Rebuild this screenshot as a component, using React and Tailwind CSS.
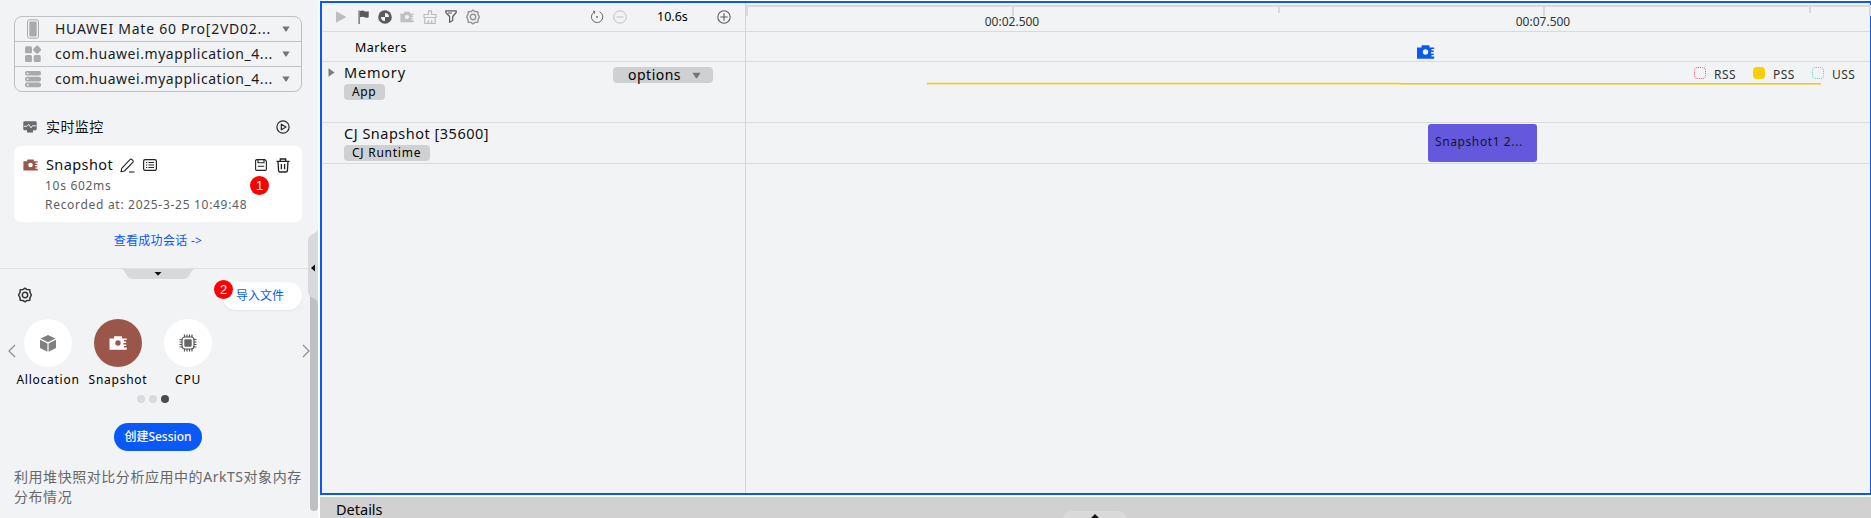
import React from 'react';

const Camera = ({ className }) => (
  <svg viewBox="0 0 18 14" className={className} fill="currentColor">
    <path
      fillRule="evenodd"
      d="M0.5 2.5H5V1Q5 0.3 5.7 0.3H12.3Q13 0.3 13 1V2.5H17.7V4H15V5.5H17.2V7H14.5V8.5H17.2V10H15V11.5H17.7V13.7H0.5ZM9 4.3A2.7 2.7 0 1 0 9 9.7A2.7 2.7 0 1 0 9 4.3Z"
    />
  </svg>
);

const Gear = ({ className, sw = 1.5 }) => (
  <svg viewBox="0 0 16 16" className={className} fill="none" stroke="currentColor" strokeWidth={sw} strokeLinejoin="round">
    <path d="M5.9 2.6L8 1.2L10.100 2.600L12.800 2.800L13 5.400L14.400 8L13 10.600L12.800 13.200L10.100 13.400L8 14.800L5.900 13.400L3.200 13.200L3 10.600L1.600 8L3 5.400L3.200 2.800Z" />
    <circle cx="8" cy="8" r="2.7" />
  </svg>
);

const Down = ({ className }) => (
  <svg viewBox="0 0 8 6" className={className} fill="currentColor">
    <path d="M0.4 0.5H7.6L4.6 5.2Q4 5.9 3.4 5.2Z" />
  </svg>
);

const PhoneIcon = () => (
  <svg viewBox="0 0 18 20" className="h-5 w-[18px]">
    <rect x="3.5" y="0.8" width="11" height="18.4" rx="2" fill="none" stroke="#a9aaab" />
    <rect x="5.3" y="2.6" width="7.4" height="14.8" rx="0.8" fill="#a9aaab" />
  </svg>
);
const AppsIcon = () => (
  <svg viewBox="0 0 18 18" className="size-[18px]" fill="#a9aaab">
    <rect x="1" y="1.2" width="7" height="7" rx="1.5" />
    <rect x="9.8" y="1.4" width="6.6" height="6.6" rx="1.5" transform="rotate(45 13.1 4.7)" />
    <rect x="1" y="10" width="7" height="7" rx="1.5" />
    <rect x="9.7" y="10" width="7" height="7" rx="1.5" />
  </svg>
);
const ServerIcon = () => (
  <svg viewBox="0 0 18 18" className="size-[18px]">
    <g fill="#a9aaab">
      <rect x="1" y="1" width="16" height="4.6" rx="2" />
      <rect x="1" y="6.8" width="16" height="4.6" rx="2" />
      <rect x="1" y="12.6" width="16" height="4.6" rx="2" />
    </g>
    <g fill="#f1f3f5">
      <circle cx="3.7" cy="3.3" r="0.9" />
      <circle cx="3.7" cy="9.1" r="0.9" />
      <circle cx="3.7" cy="14.9" r="0.9" />
    </g>
  </svg>
);

const devices = [
  { icon: PhoneIcon, name: 'HUAWEI Mate 60 Pro[2VD02...', spacing: 'tracking-[0.75px]' },
  { icon: AppsIcon, name: 'com.huawei.myapplication_4...', spacing: 'tracking-[0.55px]' },
  { icon: ServerIcon, name: 'com.huawei.myapplication_4...', spacing: 'tracking-[0.55px]' },
];

function Badge({ children, className }) {
  return (
    <span className={`absolute flex size-[19px] items-center justify-center rounded-full bg-[#fe0000] font-['Liberation_Sans'] text-[13px] tracking-normal text-white ${className}`}>
      {children}
    </span>
  );
}

function Sidebar() {
  return (
    <aside className="relative h-[518px] w-[318px] shrink-0 overflow-hidden bg-[#f1f3f5]">
      <div className="flex h-[268px] flex-col pl-[14px] pr-4 pt-4">
        <div className="h-[76px] shrink-0 divide-y divide-[#bfc0c2] rounded-[8px] border border-[#bfc0c2]">
          {devices.map(({ icon: Icon, name, spacing }, i) => (
            <div key={i} className="flex h-[25px] items-center pl-[9px] pr-[11px] last:h-6">
              <Icon />
              <span className={`ml-[13px] flex-1 whitespace-nowrap pb-px text-[14px] leading-[22px] text-[#1c1c1e] ${spacing}`}>{name}</span>
              <Down className="h-[6px] w-[8px] text-[#70757c]" />
            </div>
          ))}
        </div>

        <div className="mt-[25px] flex h-5 shrink-0 items-center pl-[9px] pr-3">
          <svg viewBox="0 0 14 12" className="h-3 w-[14px]">
            <path d="M1.5 0.3H12.5Q13.7 0.3 13.7 1.5V8Q13.7 9.2 12.5 9.2H1.5Q0.3 9.2 0.3 8V1.5Q0.3 0.3 1.5 0.3ZM4 9H10V11.5H4Z" fill="#6a6b6e" />
            <path d="M1 5.300H4L5.7 3.300L8 6.800L9.3 4.800H13" fill="none" stroke="#fff" strokeWidth="0.900" />
          </svg>
          <span className="ml-[9px] flex-1 text-[14px] leading-5 tracking-[0.4px] text-[#111]">实时监控</span>
          <svg viewBox="0 0 14 14" className="size-[14px]" fill="none" stroke="#2a2a2c" strokeWidth="1.2">
            <circle cx="7" cy="7" r="6.1" />
            <path d="M5.3 4.2L10 7L5.3 9.8Z" strokeLinejoin="round" />
          </svg>
        </div>

        <div className="relative mt-[9px] h-[76px] shrink-0 rounded-[7px] bg-white pl-[9px] pr-3 pt-[9px]">
          <div className="flex h-5 items-center">
            <Camera className="h-[12px] w-[15px] text-[#9b564b]" />
            <span className="ml-2 w-[74px] pb-0.5 text-[14.5px] leading-5 tracking-[0.4px] text-[#111]">Snapshot</span>
            <svg viewBox="0 0 15 15" className="size-[15px]" fill="none" stroke="#222" strokeWidth="1.1" strokeLinejoin="round">
              <path d="M1 13.8L1.7 10.3L10.2 1.4Q11 0.8 11.8 1.4L13 2.6Q13.6 3.3 13 4.1L4.5 13Z" />
              <path d="M9 14H14.5" />
            </svg>
            <svg viewBox="0 0 14 12" className="ml-2 h-3 w-[14px]" fill="none" stroke="#222" strokeWidth="1.2">
              <rect x="0.6" y="0.6" width="12.8" height="10.8" rx="1.6" />
              <path d="M3 3.5H4.3M5.5 3.5H11M3 6H4.3M5.5 6H11M3 8.5H4.3M5.5 8.5H11" strokeWidth="1" />
            </svg>
            <span className="flex-1" />
            <svg viewBox="0 0 12 12" className="size-3" fill="none" stroke="#222" strokeWidth="1.1">
              <path d="M1.8 0.6H9.8L11.4 2.2V10.2Q11.4 11.4 10.2 11.4H1.8Q0.6 11.4 0.6 10.2V1.8Q0.6 0.6 1.8 0.6Z" />
              <path d="M3 0.8V3.8H9V0.8M2.8 7.3H9.2" />
            </svg>
            <svg viewBox="0 0 14 15" className="ml-[9px] h-[15px] w-[14px]" fill="none" stroke="#222" strokeWidth="1.3">
              <path d="M0.5 3.3H13.5M4.3 3V1H9.7V3M2 3.5L2.6 12.6Q2.7 14 4 14H10Q11.3 14 11.4 12.6L12 3.5M5.4 6V11.3M8.6 6V11.3" />
            </svg>
          </div>
          <div className="mt-px pl-[22px] text-[12px] leading-[19px] tracking-[0.7px] text-[#5c5d60]">
            <p>10s 602ms</p>
            <p className="whitespace-nowrap">Recorded at: 2025-3-25 10:49:48</p>
          </div>
          <Badge className="left-[236px] top-[30px]">1</Badge>
        </div>

        <a className="mt-[9px] text-center text-[12px] leading-5 tracking-[0.3px] text-[#0a59f7]">查看成功会话 -&gt;</a>
      </div>

      <div className="h-[250px] border-t border-[#dfe0e2]">
        <div className="relative flex h-[41px] items-end justify-between pl-[17px] pr-4">
          <svg viewBox="0 0 74 10" className="absolute left-[121px] top-0 h-[10px] w-[74px]">
            <path d="M0 0H74Q70.500 1 69 5Q67 10 62 10H12Q7 10 5 5Q3.500 1 0 0Z" fill="#d8d9da" />
            <path d="M33.500 3H40.500L37.500 6.300Q37 6.800 36.500 6.300Z" fill="#111" />
          </svg>
          <Gear className="mb-[7px] size-4 text-[#333]" />
          <button className="h-7 w-[80px] rounded-full bg-white pr-1 text-[12px] leading-7 text-[#0a59f7] shadow-sm shadow-black/5">导入文件</button>
          <Badge className="left-[214px] top-[11px]">2</Badge>
        </div>

        <div className="relative mt-[9px] flex h-[72px]">
          <svg viewBox="0 0 8 14" className="absolute left-2 top-[25px] h-[14px] w-2" fill="none" stroke="#8c8d90" strokeWidth="1.2">
            <path d="M7 1L1 7L7 13" />
          </svg>
          <svg viewBox="0 0 8 14" className="absolute left-[302px] top-[25px] h-[14px] w-2" fill="none" stroke="#8c8d90" strokeWidth="1.2">
            <path d="M1 1L7 7L1 13" />
          </svg>
          <div className="ml-[13px] flex w-[70px] flex-col items-center">
            <div className="flex size-12 items-center justify-center rounded-full bg-white">
              <svg viewBox="0 0 16 17" className="h-[17px] w-4" fill="#808080">
                <path d="M8 0L15.500 3.600L8 7.200L0.500 3.600Z" />
                <path d="M0 4.800L7.400 8.400V16.800L0 13ZM16 4.800L8.600 8.400V16.800L16 13Z" />
              </svg>
            </div>
            <span className="mt-[3px] text-[12px] leading-5 tracking-[0.75px] text-black">Allocation</span>
          </div>
          <div className="flex w-[70px] flex-col items-center">
            <div className="flex size-12 items-center justify-center rounded-full bg-[#9b564b]">
              <Camera className="h-[14px] w-[18px] text-white" />
            </div>
            <span className="mt-[3px] text-[12px] leading-5 tracking-[0.75px] text-black">Snapshot</span>
          </div>
          <div className="flex w-[70px] flex-col items-center">
            <div className="flex size-12 items-center justify-center rounded-full bg-white">
              <svg viewBox="0 0 18 18" className="size-[18px]" fill="none" stroke="#555" strokeWidth="1.2">
                <rect x="3" y="3" width="12" height="12" rx="3" />
                <rect x="5.300" y="5.300" width="7.400" height="7.400" rx="1" fill="#666" stroke="none" />
                <path d="M5.500 0.500V3M8 0.500V3M10.500 0.500V3M13 0.500V3M5.500 15V17.500M8 15V17.500M10.500 15V17.500M13 15V17.500M0.500 5.500H3M0.500 8H3M0.500 10.500H3M0.500 13H3M15 5.500H17.500M15 8H17.500M15 10.500H17.500M15 13H17.500" />
              </svg>
            </div>
            <span className="mt-[3px] text-[12px] leading-5 tracking-[0.75px] text-black">CPU</span>
          </div>
        </div>

        <div className="mt-1 flex gap-1 pl-[137px]">
          <i className="size-2 rounded-full bg-[#d9dadc]" />
          <i className="size-2 rounded-full bg-[#d9dadc]" />
          <i className="size-2 rounded-full bg-[#4b4c4e]" />
        </div>

        <button className="ml-[114px] mt-5 block h-7 w-[88px] whitespace-nowrap rounded-full bg-[#0a59f7] text-[12px] font-medium leading-7 text-white">创建Session</button>
        <p className="ml-[14px] mt-4 w-[292px] text-[14px] leading-5 tracking-[0.55px] text-[#66676a]">利用堆快照对比分析应用中的ArkTS对象内存分布情况</p>
      </div>

      <div className="absolute left-[310px] top-[268px] h-[243px] w-2 rounded-b-[4px] bg-[#bfc0c2]" />
      <svg viewBox="0 0 10 74" className="absolute left-[308px] top-[229px] h-[74px] w-[10px]">
        <path d="M10 0Q9 3.500 5 5Q0 7 0 12V62Q0 67 5 69Q9 70.500 10 74Z" fill="#d8d9da" />
        <path d="M7 35.500V42.500L3.500 39.500Q3 39 3.500 38.500Z" fill="#111" />
      </svg>
    </aside>
  );
}

function Toolbar() {
  return (
    <div className="flex h-[27px] items-center pl-[13px] text-[#5a5b5e]">
      <svg viewBox="0 0 12 12" className="h-3 w-3" fill="#bcbdbf"><path d="M1 0.300L11.500 6L1 11.700Z" /></svg>
      <svg viewBox="0 0 11 14" className="ml-[11px] h-[14px] w-[11px]" fill="currentColor">
        <path d="M0.500 0.500H1.700V14H0.500ZM2 1Q4.500 0 6.500 1.200Q8.500 2 10.700 1.200V7.200Q8.500 8.200 6.500 7.300Q4.500 6.200 2 7.200Z" />
      </svg>
      <svg viewBox="0 0 14 14" className="ml-[9px] size-[14px]">
        <circle cx="7" cy="7" r="6.800" fill="#5a5b5e" />
        <path d="M7 7V3A4 4 0 0 1 11 7ZM7 7V11A4 4 0 0 1 3 7Z" fill="#f1f3f5" />
      </svg>
      <Camera className="ml-2 h-3 w-[14px] text-[#c0c1c3]" />
      <svg viewBox="0 0 14 14" className="ml-[9px] size-[14px]" fill="none" stroke="#bcbdbf" strokeWidth="1.200">
        <path d="M5.500 4.500V0.800H8.500V4.500H13V7.500H1V4.500ZM1.800 7.500V13.300H12.200V7.500M5.300 13V10M8.700 13V10" />
      </svg>
      <svg viewBox="0 0 12 13" className="ml-2 h-[13px] w-3" fill="none" stroke="currentColor" strokeWidth="1.200" strokeLinejoin="round">
        <path d="M0.800 0.800H11.200V2.500L7.700 6.500V10.500L4.600 12.200V6.500L0.800 2.500Z" />
        <path d="M3 3H7" strokeWidth="1" />
      </svg>
      <Gear className="ml-2 size-4 text-[#929396]" sw={1.4} />
      <svg viewBox="0 0 14 14" className="ml-[109px] size-[14px]" fill="none" stroke="#66676a" strokeWidth="1">
        <path d="M9.500 1.700A5.700 5.700 0 1 1 4.200 2" />
        <path d="M3 1L5 1.600L4.300 3.800" />
        <circle cx="7" cy="7" r="0.900" fill="#66676a" stroke="none" />
      </svg>
      <svg viewBox="0 0 14 14" className="ml-[9px] size-[14px]" fill="none" stroke="#c0c1c3" strokeWidth="1">
        <circle cx="7" cy="7" r="6.200" /><path d="M3.500 7H10.500" />
      </svg>
      <span className="ml-[30px] w-[60px] text-[12.5px] leading-5 text-black">10.6s</span>
      <svg viewBox="0 0 14 14" className="size-[14px]" fill="none" stroke="#5a5b5e" strokeWidth="1.100">
        <circle cx="7" cy="7" r="6.200" /><path d="M3.300 7H10.700M7 3.300V10.700" />
      </svg>
    </div>
  );
}

const Tag = ({ children, className }) => (
  <span className={`block h-4 rounded-[4px] bg-[#cfd0d2] pl-2 text-[12px] leading-4 text-black ${className}`}>{children}</span>
);

function TrackList() {
  return (
    <div className="w-[424px] shrink-0 border-r border-[#d5d6d8]">
      <div className="h-[29px] border-b border-[#d9dadc]"><Toolbar /></div>
      <div className="h-[30px] border-b border-[#d9dadc] pl-[33px] pt-1.5 text-[12.5px] leading-5 tracking-[0.5px] text-black">Markers</div>
      <div className="flex h-[61px] border-b border-[#d9dadc] pl-1.5">
        <svg viewBox="0 0 7 9" className="mt-1.5 h-[9px] w-[7px]" fill="#7a7e84"><path d="M0.500 0.300L6.500 4.500L0.500 8.700Z" /></svg>
        <div className="ml-[9px] w-[269px]">
          <div className="mb-px text-[14.5px] leading-[21px] tracking-[0.8px] text-[#111]">Memory</div>
          <Tag className="w-[41px] tracking-[0.6px]">App</Tag>
        </div>
        <div className="mt-[5px] flex h-4 w-[100px] items-center rounded-[4px] bg-[#cfd0d2] pl-[15px]">
          <span className="w-[64px] text-[14px] leading-4 tracking-[0.5px] text-black">options</span>
          <Down className="h-[7px] w-[9px] text-[#70757c]" />
        </div>
      </div>
      <div className="h-[41px] border-b border-[#d9dadc] pl-[22px]">
        <div className="mb-px text-[14.5px] leading-[21px] tracking-[0.5px] text-[#111]">CJ Snapshot [35600]</div>
        <Tag className="w-[86px] tracking-[0.75px]">CJ Runtime</Tag>
      </div>
    </div>
  );
}

const legend = [
  { name: 'RSS', box: 'border border-dotted border-[#e0526c]' },
  { name: 'PSS', box: 'bg-[#f9cf00]' },
  { name: 'USS', box: 'border border-dotted border-[#64cdb8]' },
];

function Timeline() {
  return (
    <div className="relative min-w-0 flex-1">
      <div className="h-[29px] border-b border-[#d9dadc]">
        <svg viewBox="0 0 1125 28" className="h-7 w-[1125px]" fill="#d9d9d9" shapeRendering="crispEdges">
          <path d="M0 2H1125V4H0ZM0 4H2V13H0ZM266 4H268V13H266ZM532 4H534V10H532ZM797 4H799V13H797ZM1063 4H1065V10H1063ZM1123 4H1125V13H1123Z" />
        </svg>
      </div>
      <span className="absolute left-[226px] top-[11px] w-[80px] text-center text-[12px] leading-4 text-[#333]">00:02.500</span>
      <span className="absolute left-[757px] top-[11px] w-[80px] text-center text-[12px] leading-4 text-[#333]">00:07.500</span>
      <div className="h-[30px] border-b border-[#d9dadc] pl-[670px] pt-[13px]">
        <Camera className="h-[14px] w-[19px] text-[#0a59f7]" />
      </div>
      <div className="relative h-[61px] border-b border-[#d9dadc]">
        <svg viewBox="0 0 1125 4" className="absolute left-0 top-5 h-1 w-[1125px]" shapeRendering="crispEdges">
          <path d="M181 0H654V1H181Z" fill="#f3eabc" />
          <path d="M181 1H1075V2H181Z" fill="#f5cb12" />
          <path d="M181 2H654V3H181Z" fill="#f3e7a6" />
          <path d="M654 2H1075V3H654Z" fill="#f5dc70" />
        </svg>
        <div className="flex pl-[948px] pt-[5px]">
          {legend.map(({ name, box }) => (
            <div key={name} className="flex w-[59px] shrink-0">
              <i className={`size-3 rounded-[4px] ${box}`} />
              <span className="ml-2 mt-px text-[12px] leading-[14px] tracking-[0.5px] text-[#333]">{name}</span>
            </div>
          ))}
        </div>
      </div>
      <div className="h-[41px] border-b border-[#d9dadc] pl-[682px] pt-px">
        <div className="h-[38px] w-[109px] rounded-[3px] bg-[#6459dc] pl-[7px] text-[12px] leading-[36px] tracking-[0.6px] text-[#16142e]">Snapshot1 2...</div>
      </div>
    </div>
  );
}

export default function App() {
  return (
    <div className="flex h-[518px] w-[1871px] overflow-hidden bg-white font-['Noto_Sans','Noto_Sans_CJK_SC',sans-serif]">
      <Sidebar />
      <main className="ml-0.5 flex w-[1551px] flex-col pt-px">
        <section className="flex h-[494px] border-2 border-r border-[#0a59f7] bg-[#f1f3f5]">
          <TrackList />
          <Timeline />
        </section>
        <footer className="relative mt-0.5 h-[21px] bg-[#d1d1d1] pl-4 text-[14.5px] leading-[25px] text-black">
          Details
          <svg viewBox="0 0 64 7" className="absolute left-[743px] top-[14px] h-[7px] w-16">
            <path d="M0 7Q2 0 9 0H55Q62 0 64 7Z" fill="#d9d9d9" />
            <path d="M28 7L32 3L36 7Z" fill="#111" />
          </svg>
        </footer>
      </main>
    </div>
  );
}
